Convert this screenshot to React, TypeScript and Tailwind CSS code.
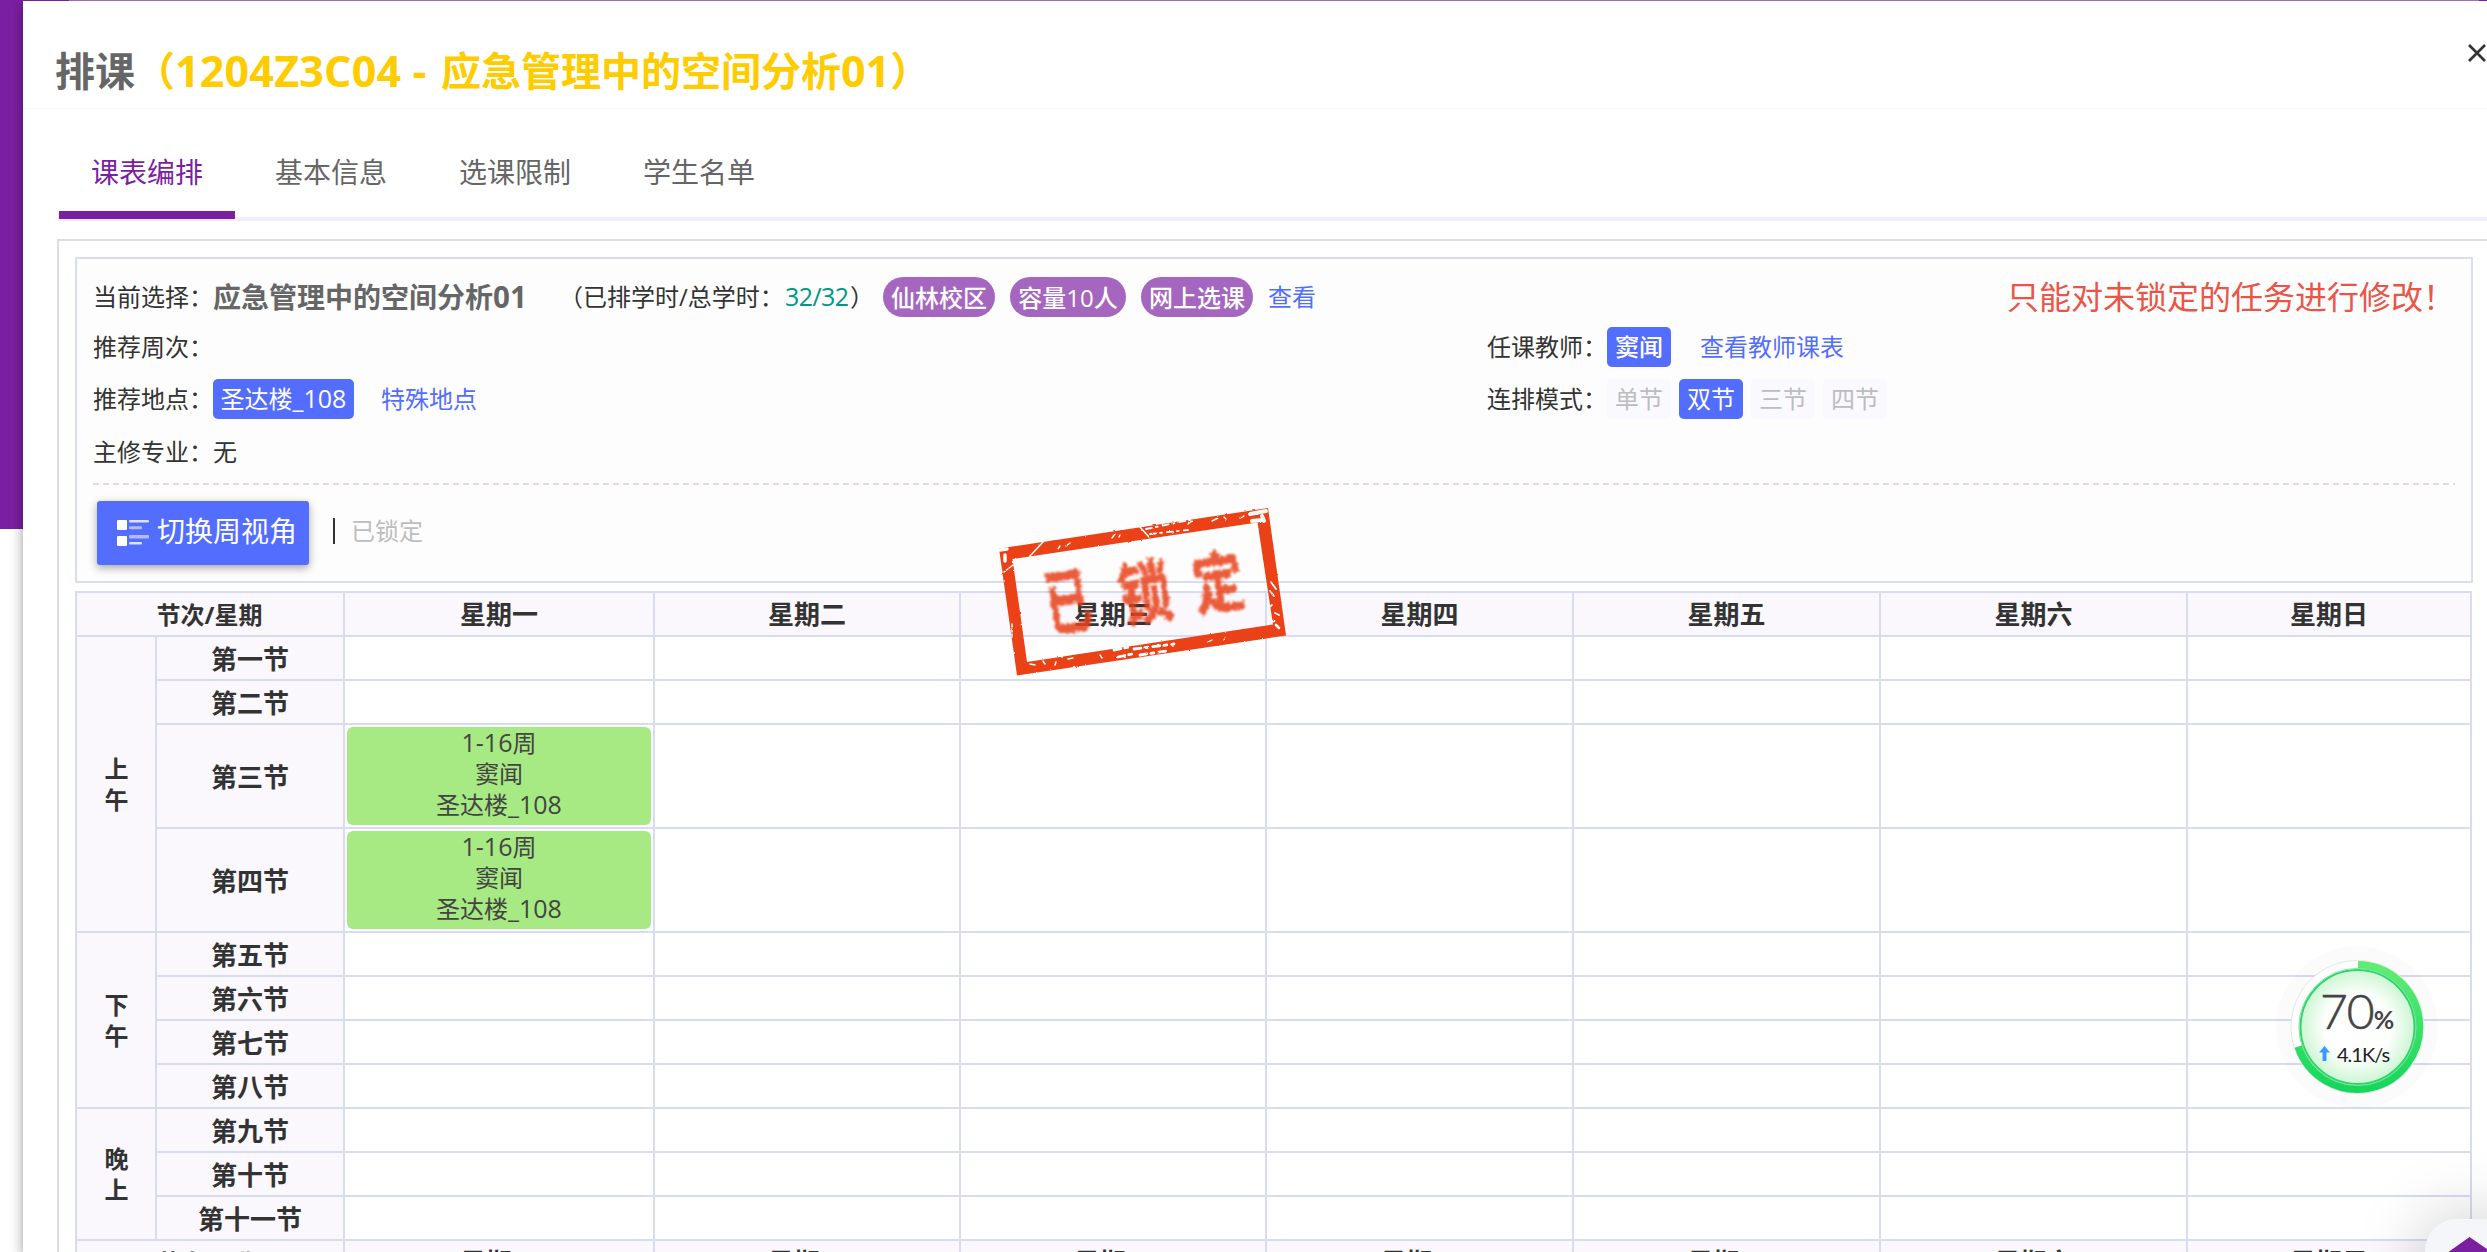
import React from "react";

const DAYS = ["星期一", "星期二", "星期三", "星期四", "星期五", "星期六", "星期日"];

type Slot = { name: string; lesson?: boolean };
type Period = { name: string; slots: Slot[]; span: string };

const PERIODS: Period[] = [
  {
    name: "上午",
    span: "row-span-4",
    slots: [
      { name: "第一节" },
      { name: "第二节" },
      { name: "第三节", lesson: true },
      { name: "第四节", lesson: true },
    ],
  },
  {
    name: "下午",
    span: "row-span-4",
    slots: [{ name: "第五节" }, { name: "第六节" }, { name: "第七节" }, { name: "第八节" }],
  },
  {
    name: "晚上",
    span: "row-span-3",
    slots: [{ name: "第九节" }, { name: "第十节" }, { name: "第十一节" }],
  },
];

const CELL = "border-r-2 border-b-2 border-[#d7dcf1]";
const HEAD = "flex items-center justify-center bg-[#faf8fc] font-bold text-[#333]";

function HeaderRow() {
  return (
    <>
      <div className={`${CELL} ${HEAD} col-span-2 pt-px pr-px text-2xl`}>节次/星期</div>
      {DAYS.map((d) => (
        <div key={d} className={`${CELL} ${HEAD} pt-px text-[26px]`}>
          {d}
        </div>
      ))}
    </>
  );
}

function Lesson() {
  return (
    <div className="h-[98px] rounded-[6px] bg-[#a7e983] text-center text-2xl leading-[31px] text-[#444]">
      <div className="h-[31px]">
        <span className="text-[25px]">1-16</span>周
      </div>
      <div className="h-[31px]">窦闻</div>
      <div className="h-[31px]">
        圣达楼<span className="text-[25px]">_108</span>
      </div>
    </div>
  );
}

function Timetable() {
  return (
    <div className="mt-2 grid w-[2397px] grid-cols-[80px_188px_310px_306px_306px_307px_307px_307px_284px] grid-rows-[44px_44px_44px_104px_104px_44px_44px_44px_44px_44px_44px_44px_44px] border-t-2 border-l-2 border-[#d7dcf1] bg-white">
      <HeaderRow />
      {PERIODS.map((p) => (
        <React.Fragment key={p.name}>
          <div className={`${CELL} ${HEAD} ${p.span} pl-px text-2xl leading-[31px]`}>
            <span className="w-6">{p.name}</span>
          </div>
          {p.slots.map((s) => (
            <React.Fragment key={s.name}>
              <div className={`${CELL} ${HEAD} pt-0.5 text-[26px]`}>{s.name}</div>
              {DAYS.map((d, i) => (
                <div key={d} className={`${CELL} p-0.5`}>
                  {s.lesson && i === 0 && <Lesson />}
                </div>
              ))}
            </React.Fragment>
          ))}
        </React.Fragment>
      ))}
      <HeaderRow />
    </div>
  );
}

function Pill({ children, w }: { children: React.ReactNode; w: string }) {
  return (
    <span className={`${w} flex h-10 items-center justify-center rounded-[20px] bg-[#a566c0] pt-px font-medium text-white`}>
      {children}
    </span>
  );
}

const TAG_ON = "flex h-10 items-center justify-center rounded-[5px] bg-[#536dfe] text-white";
const TAG_OFF = "flex h-10 items-center justify-center rounded-[5px] bg-[#f9f9ff] text-[#bdbdbd]";

function InfoBox() {
  return (
    <div className="h-[326px] w-[2398px] border-2 border-[#d9dcf2] bg-[#fdfdfd] pt-[14px] pr-4 pl-4 text-2xl whitespace-nowrap text-[#333]">
      <div className="flex h-12 items-center">
        <span className="w-[120px]">当前选择：</span>
        <span className="w-[346px] text-[28px] leading-[38px] font-bold text-[#666]">
          应急管理中的空间分析<span className="text-[29.5px]">01</span>
        </span>
        <span className="w-[226px]">（已排学时/总学时：</span>
        <span className="w-[65px] text-[25px] tracking-[-0.6px] text-[#009688]">32/32</span>
        <span className="w-[33px]">）</span>
        <Pill w="w-[112px]">仙林校区</Pill>
        <span className="w-[15px]" />
        <Pill w="w-[116px]">容量10人</Pill>
        <span className="w-[15px]" />
        <Pill w="w-[112px]">网上选课</Pill>
        <span className="ml-[15px] text-[#536dfe]">查看</span>
        <span className="ml-auto text-[32px] text-[#ea5548]">只能对未锁定的任务进行修改！</span>
      </div>
      <div className="flex h-[52px] items-center">
        <span className="w-[1394px]">推荐周次：</span>
        <span className="w-[120px]">任课教师：</span>
        <span className={`${TAG_ON} w-16 font-medium`}>窦闻</span>
        <span className="ml-[29px] text-[#536dfe]">查看教师课表</span>
      </div>
      <div className="flex h-[52px] items-center">
        <div className="flex w-[1394px] items-center">
          <span className="w-[120px]">推荐地点：</span>
          <span className={`${TAG_ON} w-[141px]`}>
            圣达楼<span className="text-[25px]">_108</span>
          </span>
          <span className="ml-[27px] text-[#536dfe]">特殊地点</span>
        </div>
        <span className="w-[120px]">连排模式：</span>
        <div className="flex gap-2">
          <span className={`${TAG_OFF} w-16`}>单节</span>
          <span className={`${TAG_ON} w-16`}>双节</span>
          <span className={`${TAG_OFF} w-16`}>三节</span>
          <span className={`${TAG_OFF} w-16`}>四节</span>
        </div>
      </div>
      <div className="flex h-[58px] items-center pb-1">
        <span className="w-[120px]">主修专业：</span>
        <span>无</span>
      </div>
      <div className="h-0.5 bg-[repeating-linear-gradient(90deg,#e6dadc_0_6px,transparent_6px_10px)]" />
      <div className="mt-4 ml-1 flex h-16 items-center">
        <button className="flex h-16 w-[212px] items-center rounded-[3px] bg-[#536dfe] pl-[18px] text-[28px] text-white shadow-[0_3px_8px_rgba(0,0,0,0.35)]">
          <svg width="36" height="32" viewBox="0 0 36 32" className="mr-[6px]" fill="#fff">
            <rect x="2" y="3" width="10" height="10" rx="1" />
            <rect x="2" y="19" width="10" height="10" rx="1" />
            <rect x="14" y="3" width="20" height="2.4" rx="1" opacity=".8" />
            <rect x="14" y="9.3" width="13" height="3" rx="1" opacity=".55" />
            <rect x="14" y="18" width="20" height="3.6" rx="1" opacity=".55" />
            <rect x="14" y="25" width="13" height="2.4" rx="1" opacity=".8" />
          </svg>
          <span className="-mt-0.5">切换周视角</span>
        </button>
        <span className="-mt-1 ml-6 h-[26px] w-0.5 bg-[#333]" />
        <span className="-mt-1 ml-4 text-[#bdbdbd]">已锁定</span>
      </div>
    </div>
  );
}

function Stamp() {
  return (
    <svg
      className="pointer-events-none absolute top-[500px] left-[990px]"
      width="306"
      height="184"
      viewBox="990 500 306 184"
      fill="none"
    >
      <defs>
        <filter id="rough" x="-10%" y="-10%" width="120%" height="120%">
          <feTurbulence type="fractalNoise" baseFrequency="0.3" numOctaves="2" seed="4" result="n" />
          <feDisplacementMap
            in="SourceGraphic"
            in2="n"
            scale="7"
            xChannelSelector="R"
            yChannelSelector="G"
            result="d"
          />
          <feGaussianBlur in="d" stdDeviation="0.8" />
        </filter>
        <filter id="edge" x="-5%" y="-5%" width="110%" height="110%">
          <feTurbulence type="fractalNoise" baseFrequency="0.25" numOctaves="2" seed="9" result="n" />
          <feDisplacementMap
            in="SourceGraphic"
            in2="n"
            scale="2"
            xChannelSelector="R"
            yChannelSelector="G"
            result="d"
          />
          <feGaussianBlur in="d" stdDeviation="0.4" />
        </filter>
        <mask id="wear" maskUnits="userSpaceOnUse" x="980" y="490" width="330" height="200">
          <rect x="980" y="490" width="330" height="200" fill="#fff" />
          <g stroke="#000" strokeLinecap="round">
            <path d="M1030 556l13-14M1140 527l9 10M1004 572l9-7" strokeWidth="1.5" />
            <path d="M1058 549l2-3M1066 546l4-3M1112 538l3-4M1119 537l1-2" strokeWidth="1.4" />
            <path d="M1146 529l44-9M1150 534l38-4" strokeWidth="1.8" strokeDasharray="6 4 2 5" />
            <path d="M1188 524l4-3M1212 521l6-3M1224 517l2 2M1240 518l4-2" strokeWidth="1.4" />
            <path d="M1250 514l16-3M1252 521l10-1M1262 516l2 5" strokeWidth="4" />
            <path d="M1000 550l7-1M1005 555v6" strokeWidth="3.500" />
            <path d="M1271 582l5 7M1270 591l4 5M1268 608l4-3M1275 613l4 2" strokeWidth="1.8" />
            <path d="M1268 622l6-1M1276 625l3 3" strokeWidth="2.6" />
            <path d="M1114 650l16-3M1118 657l14-3M1134 649l40-5M1140 655l26-4" strokeWidth="2.8" strokeDasharray="7 4 3 5" />
            <path d="M1030 664l5 1M1043 661l2 3M1055 665l1-3M1068 659l5-1M1100 655l2 3" strokeWidth="1.5" />
            <path d="M1208 642l4-2M1224 640l1-2" strokeWidth="1.3" />
            <path d="M1012 624v14" strokeWidth="1.6" strokeDasharray="3 2" />
          </g>
        </mask>
      </defs>
      <g filter="url(#edge)">
        <path
          mask="url(#wear)"
          fillRule="evenodd"
          fill="#ea4216"
          d="M999 548.500L1268 508L1286 635.500L1017 675.500ZM1012.500 559L1027 662L1273 624.500L1257.500 522.500Z"
        />
      </g>
      <g
        filter="url(#rough)"
        fill="#e8421a"
        stroke="#e8421a"
        strokeWidth="0.6"
        opacity=".86"
        fontFamily="'Liberation Serif','Noto Sans CJK SC',sans-serif"
        fontWeight="700"
        fontSize="50"
        textAnchor="middle"
      >
        <text transform="translate(1072 628) rotate(-8.4) scale(.9 1.45)">已</text>
        <text transform="translate(1149 618) rotate(-8.4) scale(1.04 1.38)">锁</text>
        <text transform="translate(1222 607) rotate(-8.4) scale(1 1.34)">定</text>
      </g>
    </svg>
  );
}

function SpeedBall() {
  return (
    <div className="absolute top-[946px] left-[2276px] h-[162px] w-[162px]">
      <svg width="162" height="162" viewBox="0 0 162 162" fill="none">
        <defs>
          <radialGradient id="ball">
            <stop offset="0" stopColor="#fff" />
            <stop offset=".58" stopColor="#fdfffd" />
            <stop offset="1" stopColor="#cdf6d3" />
          </radialGradient>
          <linearGradient id="ring" x1="0" y1="0" x2="0" y2="1">
            <stop offset="0" stopColor="#5fec74" />
            <stop offset="1" stopColor="#16d65c" />
          </linearGradient>
        </defs>
        <circle cx="81" cy="81" r="81" fill="#000" opacity=".015" />
        <circle cx="81.5" cy="81" r="66.5" fill="#fff" stroke="#e4e6e4" />
        <path d="M82 19a62 62 0 1 1 -59.6 81.5" stroke="url(#ring)" strokeWidth="8" />
        <circle cx="81.5" cy="81" r="57" fill="url(#ball)" stroke="#2fd56c" strokeWidth="2" />
        <circle cx="81.5" cy="81" r="58.6" stroke="#7be79a" strokeWidth="1" />
        <path d="M48.500 100l5.500 6.500h-3.500v8.500h-4v-8.500h-3.500z" fill="#3a9bfd" />
      </svg>
      <div className="absolute top-[40px] left-[44px] flex items-baseline font-['Lato'] text-[#444]">
        <span className="text-[48px] leading-[50px] font-light tracking-[-1px] [-webkit-text-stroke:0.6px_#444]">70</span>
        <span className="text-[25px] leading-[50px] font-bold">%</span>
      </div>
      <div className="absolute top-[96px] left-[61px] font-['Lato'] text-[20px] leading-[24px] tracking-[-1px] text-[#222]">
        4.1K/s
      </div>
    </div>
  );
}

export default function App() {
  return (
    <div className="relative flex h-[1252px] w-[2487px] overflow-hidden bg-white font-['Open_Sans','Noto_Sans_CJK_SC',sans-serif]">
      <div className="h-[529px] w-[23px] shrink-0 bg-[#7b1fa2]" />
      <div className="w-[2464px] shrink-0 shadow-[0_4px_12px_rgba(0,0,0,0.4)]">
        <div className="flex h-px bg-[#a566c0]">
          <div className="h-px w-[46px] bg-[#7b1fa2]" />
          <div className="ml-auto h-px w-2 bg-[#7b1fa2]" />
        </div>
        <div className="flex h-[1251px] flex-col bg-white">
          <header className="flex h-[108px] shrink-0 items-start justify-between border-b border-[#f8f8f8] bg-white pl-[32px]">
            <h1 className="mt-[41px] flex h-[58px] items-center text-[40px] leading-[58px] font-bold whitespace-nowrap text-[#666]">
              <span>排课</span>
              <span className="flex items-center text-[#fc0]">
                <span>（</span>
                <span className="w-[266px] text-[43px] tracking-[0.2px]">1204Z3C04 - </span>
                <span>应急管理中的空间分析</span>
                <span className="text-[43px]">01</span>
                <span>）</span>
              </span>
            </h1>
            <svg className="mt-[42px]" width="20" height="20" viewBox="0 0 20 20" stroke="#333" strokeWidth="2.6">
              <path d="M2 2L18 18M18 2L2 18" />
            </svg>
          </header>
          <nav className="ml-[34px] flex h-[112px] shrink-0 items-end border-b-4 border-[#f4ebf8] text-[28px]">
            {["课表编排", "基本信息", "选课限制", "学生名单"].map((t, i) => (
              <div
                key={t}
                className={
                  i === 0
                    ? "z-10 mr-2 -mb-0.5 ml-[2px] h-[78px] w-[176px] border-b-8 border-[#7b1fa2] text-center leading-[62px] text-[#7b1fa2]"
                    : "mr-2 -mb-0.5 h-[78px] w-[176px] text-center leading-[62px] text-[#666]"
                }
              >
                {t}
              </div>
            ))}
          </nav>
          <main className="mt-[18px] ml-[34px] grow border-t-2 border-l-2 border-[#ddd] pt-4 pl-4">
            <InfoBox />
            <Timetable />
          </main>
        </div>
      </div>
      <Stamp />
      <SpeedBall />
      <div className="absolute top-[1219px] left-[2425px] h-[100px] w-[100px] rounded-[32px] bg-[#f5f6f9] shadow-[0_0_70px_rgba(0,0,0,0.22)]">
        <svg width="88" height="60" viewBox="0 0 88 60" fill="#7b1fa2">
          <path d="M44.500 18L68 34v20H22V34z" />
        </svg>
      </div>
    </div>
  );
}
